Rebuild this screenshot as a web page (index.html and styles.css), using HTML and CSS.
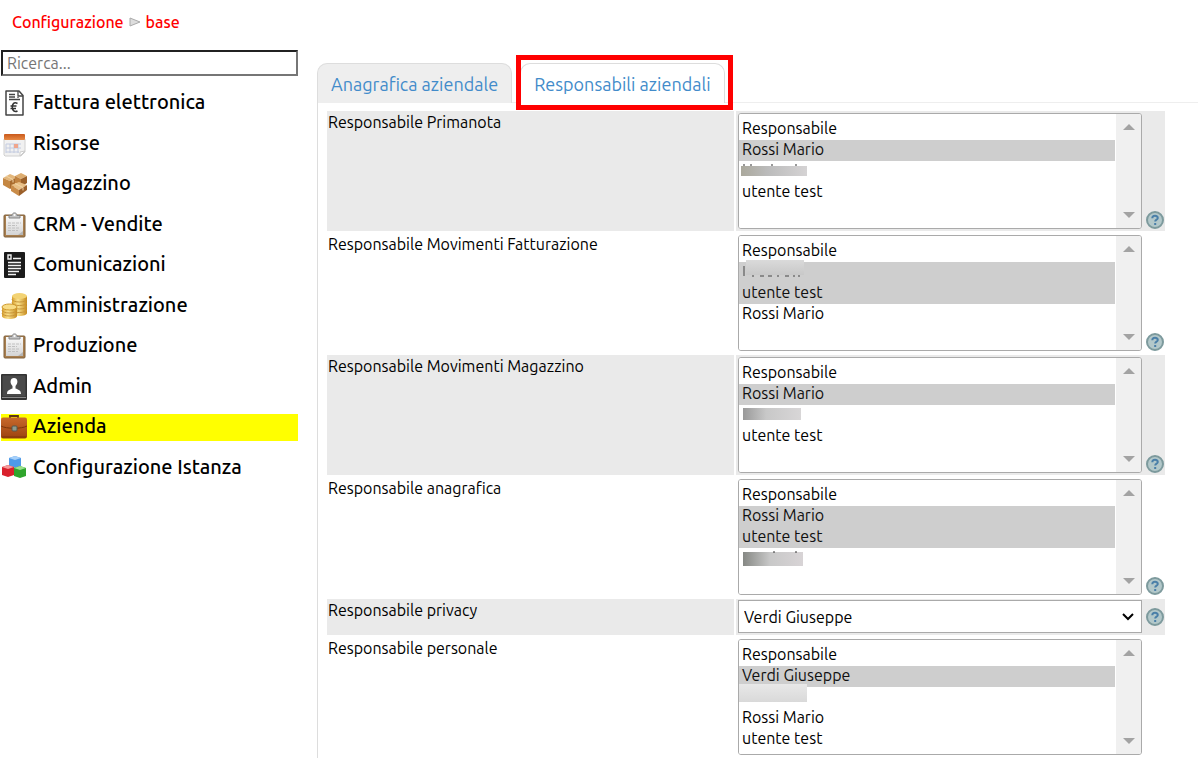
FILE: index.html
```html
<!DOCTYPE html>
<html lang="it">
<head>
    <meta charset="UTF-8">
    <meta name="viewport" content="width=device-width, initial-scale=1.0">
    <title>Configurazione - base</title>
    <link rel="stylesheet" href="styles.css">
</head>
<body>

    <!-- shared symbols -->
    <svg class="symbols" aria-hidden="true">
        <defs>
            <linearGradient id="gOrange" x1="0" y1="0" x2="0" y2="1">
                <stop offset="0" stop-color="#c9591b"/><stop offset="1" stop-color="#e88a45"/>
            </linearGradient>
            <linearGradient id="gPaper" x1="0" y1="0" x2="0" y2="1">
                <stop offset="0" stop-color="#fafafa"/><stop offset="1" stop-color="#d4d4d4"/>
            </linearGradient>
            <linearGradient id="gGold" x1="0" y1="0" x2="1" y2="0">
                <stop offset="0" stop-color="#d9a02c"/><stop offset=".4" stop-color="#fbe38f"/><stop offset="1" stop-color="#c68a1c"/>
            </linearGradient>
            <linearGradient id="gLeather" x1="0" y1="0" x2="0" y2="1">
                <stop offset="0" stop-color="#c8692c"/><stop offset="1" stop-color="#9c430f"/>
            </linearGradient>
        </defs>
        <symbol id="help" viewBox="0 0 18 18">
            <circle cx="9" cy="9" r="8" fill="#b3c8ca" stroke="#7d9a9d" stroke-width="2"/>
            <path d="M6.3 7.2C6.3 4 11.8 4 11.8 7C11.8 8.8 9.2 8.6 9.2 10.6M9.2 12v2" fill="none" stroke="#4a7fa8" stroke-width="2"/>
        </symbol>
        <symbol id="clipboard" viewBox="0 0 26 26">
            <rect x="3" y="3" width="21" height="22" rx="1" fill="#a87f4f" stroke="#80603a"/>
            <path d="M5 4h17v19H5z" fill="url(#gPaper)"/>
            <path d="M17 23l5-4v4z" fill="#b5b5b5"/>
            <path d="M7 11h13M7 13.500h9M7 16h12M7 18.500h10" stroke="#c0c0c0" stroke-dasharray="3 1"/>
            <path d="M8 6V3.500h3C11 0 16 0 16 3.500h3V6z" fill="#c4c4c4" stroke="#858585"/>
            <circle cx="13.500" cy="3" r="1" fill="#fff"/>
        </symbol>
    </svg>

    <nav class="breadcrumb">
        <a href="#">Configurazione</a>
        <svg width="12" height="10" viewBox="0 0 12 10" aria-hidden="true"><path d="M1 1L11 5L1 9z" fill="#ddd" stroke="#aaa"/></svg>
        <a href="#">base</a>
    </nav>

    <div class="page">
        <aside class="sidebar">
            <input type="text" class="search" placeholder="Ricerca..." aria-label="Ricerca">

            <ul class="menu">
                <li><a href="#">
                    <svg class="icon" viewBox="0 0 26 26">
                        <path d="M5 1h13l4 4.500V25H5z" fill="#fff" stroke="#444" stroke-width="1.500" stroke-linejoin="round"/>
                        <path d="M17 1v5h5M8 4.500h6M8 7h6M8 9.500h11M17 7v1" fill="none" stroke="#444" stroke-width="1.300"/>
                        <path d="M16.500 13.500C13 11.500 11.300 14 11.300 17C11.300 20.500 13.500 22.500 16.500 21M9.500 16h6M9.500 18.500h5.500" fill="none" stroke="#333" stroke-width="1.500"/>
                    </svg>
                    Fattura elettronica</a></li>
                <li><a href="#">
                    <svg class="icon" viewBox="0 0 26 26">
                        <path d="M3 8h21v13l-4 4H4l-1-1z" fill="#f1f1f1" stroke="#d0d0d0"/>
                        <rect x="3" y="3" width="21" height="6" rx="1" fill="url(#gOrange)"/>
                        <path d="M5 13h15M5 17h15M5 21h13M5 13v9M9 13v9M13 13v9M17 13v9" stroke="#c3cbe0" fill="none"/>
                        <path d="M13 13h4v4h-4z" fill="#f0a58c"/>
                        <path d="M24 20l-5 5v-4z" fill="#fff" stroke="#ccc"/>
                    </svg>
                    Risorse</a></li>
                <li><a href="#">
                    <svg class="icon" viewBox="0 0 26 26">
                        <path d="M2 7l7-4l7 3l-7 4z" fill="#e3b77c"/><path d="M2 7l7 3v8l-7-4z" fill="#c48743"/><path d="M9 10l7-4v8l-7 4z" fill="#a86b2e"/>
                        <path d="M14 5l6-3l6 3l-6 3z" fill="#ddad70"/><path d="M14 5l6 3v8l-6-3z" fill="#c08240"/><path d="M20 8l6-3v7l-6 4z" fill="#9b6029"/>
                        <path d="M10 14l8-3l8 3l-8 5z" fill="#e8bf86"/><path d="M10 14l8 5v6l-8-5z" fill="#c98c49"/><path d="M18 19l8-5v5l-8 6z" fill="#9b5f2a"/>
                        <path d="M5 5l7 3.500v3M14 12.500l8 4v3" fill="none" stroke="#f1d4a5"/>
                    </svg>
                    Magazzino</a></li>
                <li><a href="#">
                    <svg class="icon"><use href="#clipboard"/></svg>
                    CRM - Vendite</a></li>
                <li><a href="#">
                    <svg class="icon" viewBox="0 0 26 26">
                        <rect x="3" y="0" width="21" height="26" rx="1" fill="#1b1b1b"/>
                        <path d="M7 3h3v4H7zM12 6.500h8M7 10.500h13M7 13.500h13M7 16.500h13M7 19.500h11M7 22.500h8" stroke="#f2f2f2" stroke-width="1.400" fill="none"/>
                    </svg>
                    Comunicazioni</a></li>
                <li><a href="#">
                    <svg class="icon" viewBox="0 0 26 26">
                        <path d="M11 3v17c0 4 15 4 15 0V3z" fill="url(#gGold)"/>
                        <path d="M11 6c0 4 15 4 15 0M11 9.500c0 4 15 4 15 0M11 13c0 4 15 4 15 0M11 16.500c0 4 15 4 15 0" fill="none" stroke="#c8953a"/>
                        <ellipse cx="18.500" cy="3" rx="7.500" ry="3" fill="#f3d374"/>
                        <path d="M1 14v9c0 4 15 4 15 0v-9z" fill="url(#gGold)"/>
                        <path d="M1 17c0 4 15 4 15 0M1 20c0 4 15 4 15 0" fill="none" stroke="#c8953a"/>
                        <ellipse cx="8.500" cy="14" rx="7.500" ry="3" fill="#f8dc85" stroke="#cf9a30"/>
                    </svg>
                    Amministrazione</a></li>
                <li><a href="#">
                    <svg class="icon"><use href="#clipboard"/></svg>
                    Produzione</a></li>
                <li><a href="#">
                    <svg class="icon" viewBox="0 0 26 26">
                        <rect x="0" y="0" width="26" height="26" rx="1" fill="#333"/>
                        <rect x="1.500" y="1.500" width="23" height="21" fill="#4a4a4a"/>
                        <path d="M1 23.500h24" stroke="#8a8a8a"/>
                        <path d="M6 20c0-4 3-4.500 5.500-5.500V12C8.500 9 9 4 13 4s4.500 5 1.500 8v2.500C17 15.500 20 16 20 20z" fill="#fff"/>
                    </svg>
                    Admin</a></li>
                <li class="active"><a href="#">
                    <svg class="icon" viewBox="0 0 26 26">
                        <path d="M9 4V2h8v2" fill="none" stroke="#5e3415" stroke-width="1.800"/>
                        <rect x="0" y="3.500" width="26" height="21" rx="2" fill="url(#gLeather)"/>
                        <path d="M0 12c5 3 21 3 26 0M1 23h24" fill="none" stroke="#7b350c"/>
                        <rect x="11" y="12" width="5" height="5" rx="1" fill="#8f9a8c" stroke="#55584c"/>
                    </svg>
                    Azienda</a></li>
                <li><a href="#">
                    <svg class="icon" viewBox="0 0 26 26">
                        <path d="M8 3l6-2l6 2v8l-6 2l-6-2z" fill="#4e9ae8"/><path d="M8 3l6-2l6 2l-6 2z" fill="#a6d0fa"/>
                        <path d="M1 12l6-2l6 2v8l-6 2l-6-2z" fill="#d9202c"/><path d="M1 12l6-2l6 2l-6 2z" fill="#f59a9a"/>
                        <path d="M13 13l6-2l6 2v8l-6 2l-6-2z" fill="#2fa52c"/><path d="M13 13l6-2l6 2l-6 2z" fill="#9be08d"/>
                    </svg>
                    Configurazione Istanza</a></li>
            </ul>
        </aside>

        <main class="content">
            <div class="tabs">
                <a href="#" class="tab">Anagrafica aziendale</a>
                <a href="#" class="tab selected">Responsabili aziendali<span class="highlight"></span></a>
            </div>

            <form class="panel">
                <table>
                    <tr class="odd">
                        <td><label for="primanota">Responsabile Primanota</label></td>
                        <td class="value"><div class="field">
                            <div class="listbox">
                                <select id="primanota" multiple>
                                    <option>Responsabile</option>
                                    <option selected>Rossi Mario</option>
                                    <option>&nbsp;</option>
                                    <option>utente test</option>
                                </select>
                                <span class="scroll"></span>
                                <svg class="smear smear-1" viewBox="0 0 66 12"><path d="M2 1h2M9 1h2M30 1h2M54 1h2" stroke="#333"/></svg>
                            </div>
                            <svg class="help"><use href="#help"/></svg>
                        </div></td>
                    </tr>
                    <tr>
                        <td><label for="fatturazione">Responsabile Movimenti Fatturazione</label></td>
                        <td class="value"><div class="field">
                            <div class="listbox">
                                <select id="fatturazione" multiple>
                                    <option>Responsabile</option>
                                    <option selected>&nbsp;</option>
                                    <option selected>utente test</option>
                                    <option>Rossi Mario</option>
                                </select>
                                <span class="scroll"></span>
                                <svg class="smear smear-2" viewBox="0 0 62 17"><path d="M1 6v10M9 16h2M17 16h4M25 16h4M34 16h2M42 16h4M50 16h2M55 16h2" stroke="#444"/></svg>
                            </div>
                            <svg class="help"><use href="#help"/></svg>
                        </div></td>
                    </tr>
                    <tr class="odd">
                        <td><label for="magazzino">Responsabile Movimenti Magazzino</label></td>
                        <td class="value"><div class="field">
                            <div class="listbox">
                                <select id="magazzino" multiple>
                                    <option>Responsabile</option>
                                    <option selected>Rossi Mario</option>
                                    <option>&nbsp;</option>
                                    <option>utente test</option>
                                </select>
                                <span class="scroll"></span>
                                <span class="smear smear-3"></span>
                            </div>
                            <svg class="help"><use href="#help"/></svg>
                        </div></td>
                    </tr>
                    <tr>
                        <td><label for="anagrafica">Responsabile anagrafica</label></td>
                        <td class="value"><div class="field">
                            <div class="listbox">
                                <select id="anagrafica" multiple>
                                    <option>Responsabile</option>
                                    <option selected>Rossi Mario</option>
                                    <option selected>utente test</option>
                                    <option>&nbsp;</option>
                                </select>
                                <span class="scroll"></span>
                                <svg class="smear smear-4" viewBox="0 0 60 15"><path d="M30 1h2M52 1h2" stroke="#333"/></svg>
                            </div>
                            <svg class="help"><use href="#help"/></svg>
                        </div></td>
                    </tr>
                    <tr class="odd">
                        <td><label for="privacy">Responsabile privacy</label></td>
                        <td class="value"><div class="field single">
                            <select id="privacy" class="dropdown">
                                <option>Verdi Giuseppe</option>
                            </select>
                            <svg class="chevron" viewBox="0 0 12 8"><path d="M1 1l5 5l5-5" fill="none" stroke="#000" stroke-width="2"/></svg>
                            <svg class="help"><use href="#help"/></svg>
                        </div></td>
                    </tr>
                    <tr>
                        <td><label for="personale">Responsabile personale</label></td>
                        <td class="value"><div class="field">
                            <div class="listbox">
                                <select id="personale" multiple>
                                    <option>Responsabile</option>
                                    <option selected>Verdi Giuseppe</option>
                                    <option>&nbsp;</option>
                                    <option>Rossi Mario</option>
                                    <option>utente test</option>
                                </select>
                                <span class="scroll"></span>
                                <span class="smear smear-5"></span>
                            </div>
                        </div></td>
                    </tr>
                </table>
            </form>
        </main>
    </div>

</body>
</html>
```
FILE: styles.css
```css
* {
    box-sizing: border-box;
}
body {
    margin: 0;
    background: #fff;
    color: #000;
    font-family: Ubuntu, "Noto Sans", sans-serif;
    font-size: 16px;
}
a {
    text-decoration: none;
}
.symbols {
    position: absolute;
    width: 0;
    height: 0;
}
.breadcrumb {
    display: flex;
    align-items: center;
    gap: 5px;
    height: 44px;
    padding-left: 12px;
    font-weight: 500;
}
.breadcrumb a {
    color: #f00;
}
.page {
    display: flex;
    align-items: flex-start;
    gap: 19px;
    padding: 6px 0 0 1px;
}

/* sidebar */
.sidebar {
    flex: 0 0 297px;
}
.search {
    display: block;
    width: 100%;
    height: 26px;
    padding: 0 4px;
    border: 2px inset #767676;
    font: inherit;
}
.search::placeholder {
    color: #757575;
}
.menu {
    display: flex;
    flex-direction: column;
    justify-content: space-between;
    min-height: 392px;
    margin: 14px 0 0;
    padding: 0;
    list-style: none;
}
.menu a {
    display: flex;
    align-items: flex-start;
    gap: 6px;
    height: 27px;
    color: #000;
    font-size: 20px;
    font-weight: 500;
    line-height: 24px;
}
.menu .active {
    background: #ff0;
}
.icon {
    width: 26px;
    height: 26px;
}

/* tabs */
.content {
    flex: 1;
    padding-top: 13px;
}
.tabs {
    display: flex;
    gap: 8px;
    border-bottom: 1px solid #eee;
}
.tab {
    position: relative;
    height: 40px;
    margin-bottom: -1px;
    padding: 0 13px;
    border: 1px solid #ddd;
    border-bottom: 0;
    border-radius: 10px 10px 0 0;
    background: #eee;
    color: #428bca;
    font-size: 18px;
    line-height: 40px;
}
.tab.selected {
    background: #fff;
}
.highlight {
    position: absolute;
    inset: -9px -9px -7px -5px;
    border: 5px solid #f00;
}
.panel {
    padding: 6px 31px 0 7px;
    border-left: 1px solid #ddd;
}

/* form */
table {
    width: 100%;
    border-spacing: 2px;
}
td {
    padding: 1px;
    vertical-align: top;
    line-height: 20px;
}
.odd td {
    background: #eaeaea;
}
.value {
    width: 429px;
}
.field {
    display: flex;
    align-items: flex-end;
    gap: 4px;
    padding: 1px 0 1px 1px;
}
.single {
    position: relative;
    align-items: center;
    padding: 0 0 1px 1px;
}
.listbox {
    position: relative;
    display: flex;
    flex: 0 0 404px;
    height: 116px;
    border: 1px solid #aaa;
    border-radius: 3px;
    background: #fff;
    overflow: hidden;
}
select {
    font: inherit;
    color: #000;
    background: #fff;
}
.listbox select {
    flex: 1;
    height: 114px;
    padding: 5px 0 0;
    border: 0;
    border-radius: 0;
    outline: 0;
    overflow: hidden;
}
.listbox option {
    height: 21px;
    min-height: 21px;
    padding: 0 3px;
    line-height: 21px;
}
.scroll {
    display: flex;
    flex-direction: column;
    justify-content: space-between;
    align-items: center;
    width: 25px;
    margin-left: 1px;
    padding: 10px 0;
    background: #f0f0f0;
}
.scroll::before,
.scroll::after {
    content: "";
    border: 6px solid transparent;
}
.scroll::before {
    border-top: 0;
    border-bottom-color: #a3a3a3;
}
.scroll::after {
    border-bottom: 0;
    border-top-color: #a3a3a3;
}
.dropdown {
    flex: 0 0 404px;
    height: 33px;
    padding: 0 5px;
    border: 1px solid #aaa;
    border-radius: 0;
    appearance: none;
}
.chevron {
    position: absolute;
    left: 385px;
    width: 12px;
    height: 8px;
    pointer-events: none;
}
.help {
    width: 18px;
    height: 18px;
}

/* obscured names */
.smear {
    position: absolute;
}
.smear-1 {
    left: 2px;
    top: 50px;
    width: 66px;
    height: 12px;
    background: linear-gradient(90deg, #aaa89c, #bbb 40%, #d5d3d4) 0 2px no-repeat;
}
.smear-2 {
    left: 4px;
    top: 24px;
    width: 62px;
    height: 17px;
    background: linear-gradient(#dadada, #c8c8c8) 3px 0 / 58px 15px no-repeat;
}
.smear-3 {
    left: 4px;
    top: 50px;
    width: 58px;
    height: 12px;
    background: linear-gradient(90deg, #999, #c8c8c8 40%, #d8d6d7);
}
.smear-4 {
    left: 4px;
    top: 71px;
    width: 60px;
    height: 15px;
    background: linear-gradient(90deg, #868884, #c8c8c8 45%, #d8d4d6) 0 1px no-repeat;
}
.smear-5 {
    left: 0;
    top: 44px;
    width: 68px;
    height: 18px;
    background: linear-gradient(#e8e8e8, #d9d9d9);
}
```
